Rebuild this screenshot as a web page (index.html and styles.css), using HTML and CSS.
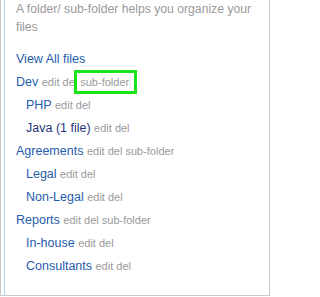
FILE: index.html
```html
<!DOCTYPE html>
<html>
<head>
<meta charset="utf-8">
<link rel="stylesheet" href="styles.css">
</head>
<body>
<div class="frame">
  <div class="panel">
    <p class="desc">A folder/ sub-folder helps you organize your files</p>
    <ul class="folders">
      <li class="row"><a class="name">View All files</a></li>
      <li class="row"><a class="name">Dev</a> <span class="act">edit del <span class="hl">sub-folder</span></span></li>
      <li class="row sub"><a class="name">PHP</a> <span class="act">edit del</span></li>
      <li class="row sub"><a class="name visited">Java (1 file)</a> <span class="act">edit del</span></li>
      <li class="row"><a class="name">Agreements</a> <span class="act">edit del sub-folder</span></li>
      <li class="row sub"><a class="name">Legal</a> <span class="act">edit del</span></li>
      <li class="row sub"><a class="name">Non-Legal</a> <span class="act">edit del</span></li>
      <li class="row"><a class="name">Reports</a> <span class="act">edit del sub-folder</span></li>
      <li class="row sub"><a class="name">In-house</a> <span class="act">edit del</span></li>
      <li class="row sub"><a class="name">Consultants</a> <span class="act">edit del</span></li>
    </ul>
  </div>
</div>
</body>
</html>
```
FILE: styles.css
```css
html, body {
  margin: 0;
  padding: 0;
  background: #ffffff;
}
body {
  font-family: "Liberation Sans", Arial, sans-serif;
}
.frame {
  width: 268px;
  height: 295px;
  border-left: 1px solid #c9c9c9;
  border-right: 1px solid #c9c9c9;
  border-bottom: 1px solid #c9c9c9;
  padding-left: 3px;
  box-sizing: content-box;
  display: flex;
}
.frame {
  width: 265px;
}
.panel {
  flex: 1;
  border-left: 1px solid #a9d3ea;
  padding-left: 11px;
}
.desc {
  margin: 0;
  font-size: 12.2px;
  line-height: 18px;
  color: #9a9a9a;
  padding-right: 6px;
}
.folders {
  list-style: none;
  margin: 12px 0 0 0;
  padding: 0;
}
.row {
  height: 23px;
  line-height: 23px;
  font-size: 12.5px;
  white-space: nowrap;
}
.row.sub {
  padding-left: 10px;
}
.name {
  color: #1f5cab;
}
.name.visited {
  color: #1e357c;
}
.act {
  font-size: 11px;
  color: #9a9a9a;
}
.hl {
  position: relative;
}
.hl::after {
  content: "";
  position: absolute;
  left: -6px;
  right: -8px;
  top: -6px;
  bottom: -6px;
  border: 3px solid #18e418;
  background: rgba(255,255,255,0);
}
.hl {
  background: #fff;
}
```
